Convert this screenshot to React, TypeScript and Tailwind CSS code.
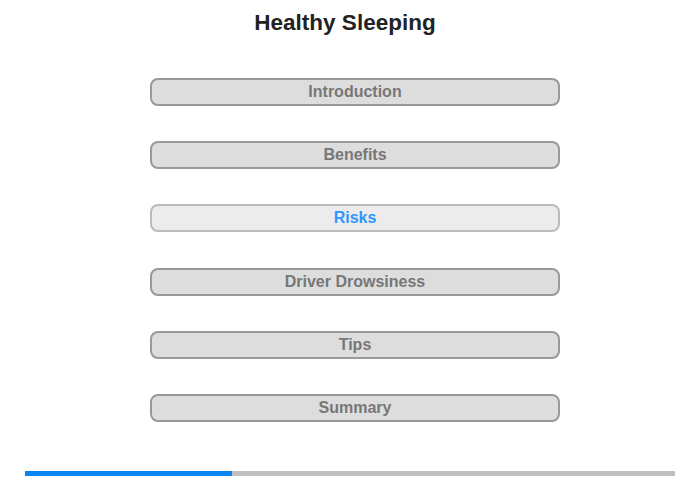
import React from "react";

const items = ["Introduction", "Benefits", "Risks", "Driver Drowsiness", "Tips", "Summary"];

export default function App() {
  return (
    <div className="w-[700px] h-[480px] bg-white flex flex-col" style={{ fontFamily: '"Liberation Sans", Arial, sans-serif' }}>
      <h1 className="text-[22.5px] leading-[26px] font-bold text-[#222] text-center pt-[10px] pr-[10px]">Healthy Sleeping</h1>
      <div className="flex flex-col items-center gap-[35.2px] mt-[42px] pl-[10px]">
        {items.map((t) =>
          t === "Risks" ? (
            <div key={t} className="w-[410px] h-[28px] rounded-[8px] border-2 border-[#bbbbbb] bg-[#ececec] flex items-center justify-center text-[16px] font-bold text-[#2f96ff]">
              {t}
            </div>
          ) : (
            <div key={t} className="w-[410px] h-[28px] rounded-[8px] border-2 border-[#999999] bg-[#dddddd] flex items-center justify-center text-[16px] font-bold text-[#777777]">
              {t}
            </div>
          )
        )}
      </div>
      <div className="mt-[49px] mx-[25px] h-[5px] bg-[#c0c0c0] flex">
        <div className="w-[207px] h-full bg-[#0a84f5]" />
      </div>
    </div>
  );
}
